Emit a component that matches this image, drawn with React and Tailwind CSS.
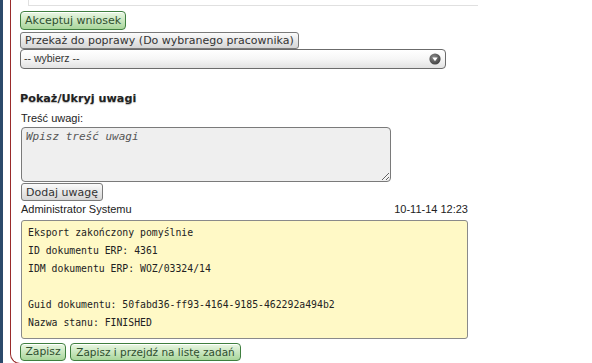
import React from "react";

const greenBtn =
  "rounded-[4px] border border-[#3f7f3f] bg-gradient-to-b from-[#eaf7e4] to-[#a9d69b] text-[#2f4f2f] leading-none whitespace-nowrap [font-family:'DejaVu_Sans',sans-serif] shadow-[inset_0_1px_0_#fff]";
const grayBtn =
  "rounded-[3px] border border-[#7a7a7a] bg-gradient-to-b from-[#fbfbfb] to-[#d6d6d6] text-[#333] leading-none whitespace-nowrap text-left [font-family:'DejaVu_Sans',sans-serif]";

export default function App() {
  return (
    <div className="flex h-[363px] w-[592px] overflow-hidden bg-white [font-family:'Liberation_Sans',Arial,sans-serif]">
      <div className="w-[3px] shrink-0 bg-[#2b4a6b]" />
      <div className="w-[7px] shrink-0" />
      <div className="flex-1 flex flex-col border-l border-b border-[#9a2b2b] rounded-bl-[10px] pl-[9px] h-[364px]">
        <div className="ml-[8px] w-[450px] h-[6px] border-l border-b border-[#e0e0e0] shrink-0" />
        <div className="mt-[5px] flex">
          <button className={`${greenBtn} h-[19px] px-[4px] text-[11px]`}>Akceptuj wniosek</button>
        </div>
        <div className="mt-[2px] flex">
          <button className={`${grayBtn} h-[17px] px-[4px] text-[11px]`}>Przekaż do poprawy (Do wybranego pracownika)</button>
        </div>
        <div className="relative w-[426px] h-[20px] rounded-[4px] border border-[#6b6b6b] bg-gradient-to-b from-white via-[#f6f6f6] to-[#e2e2e2] flex items-center pl-[3px] text-[10.5px] text-[#333]">
          -- wybierz --
          <svg className="absolute right-[4px] top-[3px]" width="12" height="12" viewBox="0 0 12 12">
            <defs>
              <radialGradient id="g" cx="0.4" cy="0.35" r="0.7">
                <stop offset="0" stopColor="#8a8a8a" />
                <stop offset="1" stopColor="#3e3e3e" />
              </radialGradient>
            </defs>
            <circle cx="6" cy="6" r="5.6" fill="url(#g)" />
            <path d="M3.3 4.6 L8.7 4.6 L6 8.3 Z" fill="#fff" />
          </svg>
        </div>
        <div className="mt-[24px] h-[12px] flex items-center text-[11.2px] font-bold text-[#222] [font-family:'DejaVu_Sans',sans-serif] [text-shadow:0_1px_1px_#bbb]">
          Pokaż/Ukryj uwagi
        </div>
        <div className="mt-[7px] h-[12px] flex items-center text-[11px] text-[#222] pl-[1px]">Treść uwagi:</div>
        <textarea
          className="mt-[3px] ml-[1px] w-[370px] h-[55px] shrink-0 rounded-[4px] border border-[#7a7a7a] bg-[#efefef] px-[4px] py-[2px] text-[11px] italic leading-[14px] [font-family:'DejaVu_Sans_Mono',monospace] placeholder:text-[#555] outline-none"
          placeholder="Wpisz treść uwagi"
        />
        <div className="mt-[1px] ml-[1px] flex">
          <button className={`${grayBtn} h-[18px] px-[4px] text-[11px]`}>Dodaj uwagę</button>
        </div>
        <div className="mt-[2px] ml-[1px] w-[447px] h-[12px] flex items-center justify-between text-[11px] text-[#222]">
          <span>Administrator Systemu</span>
          <span>10-11-14 12:23</span>
        </div>
        <div className="mt-[5px] ml-[1px] w-[447px] h-[119px] shrink-0 rounded-[3px] border border-[#8a8a8a] bg-[#fff9c6] pl-[6px] pt-[3px] text-[9.8px] leading-[18px] text-[#222] [font-family:'DejaVu_Sans_Mono',monospace] whitespace-pre">
          <div>Eksport zakończony pomyślnie</div>
          <div>ID dokumentu ERP: 4361</div>
          <div>IDM dokumentu ERP: WOZ/03324/14</div>
          <div>&nbsp;</div>
          <div>Guid dokumentu: 50fabd36-ff93-4164-9185-462292a494b2</div>
          <div>Nazwa stanu: FINISHED</div>
        </div>
        <div className="mt-[4px] flex gap-[4px]">
          <button className={`${greenBtn} h-[18px] w-[46px] text-[10.8px] text-center`}>Zapisz</button>
          <button className={`${greenBtn} h-[18px] w-[171px] text-[10.5px] text-center`}>Zapisz i przejdź na listę zadań</button>
        </div>
      </div>
    </div>
  );
}
